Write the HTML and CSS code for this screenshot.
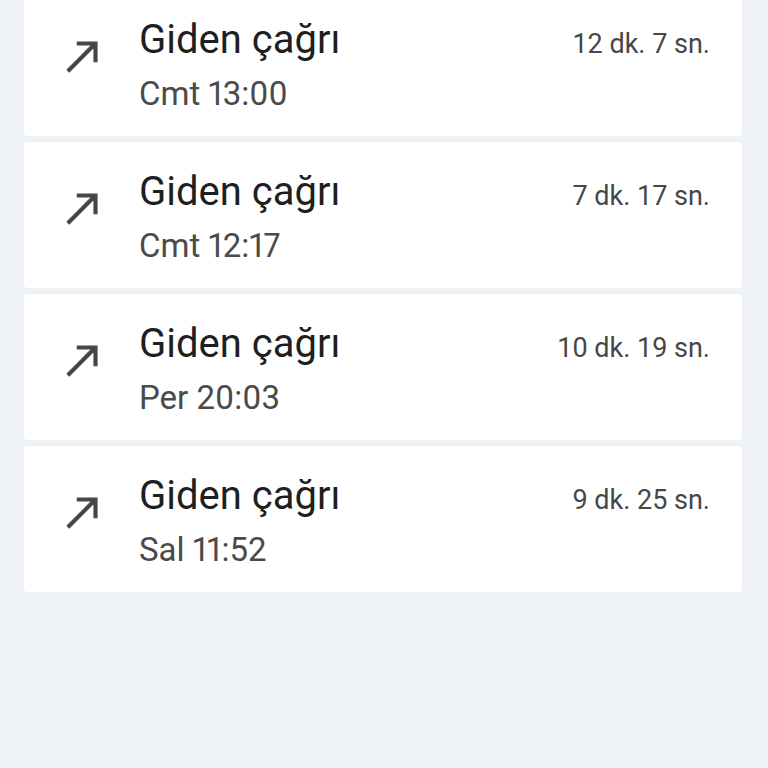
FILE: index.html
```html
<html>
    <head>
        <title>
            Arama geçmişi
        </title>
        <link rel="stylesheet" href="styles.css">
    </head>
    <body>
        <div class="call-list">
            <div class="call-card">
                <svg class="call-icon" viewBox="0 0 24 24"><path d="M9 5v2h6.59L4 18.59 5.41 20 17 8.41V15h2V5z"/></svg>
                <div class="call-info">
                    <div class="call-title">Giden çağrı</div>
                    <div class="call-time">Cmt 13:00</div>
                </div>
                <div class="call-duration">12 dk. 7 sn.</div>
            </div>
            <div class="call-card">
                <svg class="call-icon" viewBox="0 0 24 24"><path d="M9 5v2h6.59L4 18.59 5.41 20 17 8.41V15h2V5z"/></svg>
                <div class="call-info">
                    <div class="call-title">Giden çağrı</div>
                    <div class="call-time">Cmt 12:17</div>
                </div>
                <div class="call-duration">7 dk. 17 sn.</div>
            </div>
            <div class="call-card">
                <svg class="call-icon" viewBox="0 0 24 24"><path d="M9 5v2h6.59L4 18.59 5.41 20 17 8.41V15h2V5z"/></svg>
                <div class="call-info">
                    <div class="call-title">Giden çağrı</div>
                    <div class="call-time">Per 20:03</div>
                </div>
                <div class="call-duration">10 dk. 19 sn.</div>
            </div>
            <div class="call-card">
                <svg class="call-icon" viewBox="0 0 24 24"><path d="M9 5v2h6.59L4 18.59 5.41 20 17 8.41V15h2V5z"/></svg>
                <div class="call-info">
                    <div class="call-title">Giden çağrı</div>
                    <div class="call-time">Sal 11:52</div>
                </div>
                <div class="call-duration">9 dk. 25 sn.</div>
            </div>
        </div>
    </body>
</html>
```

FILE: styles.css
```css
body {
    background-color: #eef2f7;
    font-family: Roboto, "Liberation Sans", sans-serif;
    margin: 0;
    padding: 0;
}
.call-list {
    display: flex;
    flex-direction: column;
    gap: 6px;
    margin: -10px 26px 0 24px;
}
.call-card {
    display: flex;
    align-items: baseline;
    height: 146px;
    box-sizing: border-box;
    padding: 26px 32px 0 34px;
    background-color: #fff;
    border-radius: 4px;
}
.call-icon {
    align-self: flex-start;
    width: 50px;
    height: 50px;
    margin-top: 15px;
    fill: #444746;
    flex-shrink: 0;
}
.call-info {
    flex: 1;
    margin-left: 31px;
}
.call-title {
    font-size: 40px;
    line-height: 48px;
    color: #1f1f1f;
}
.call-time {
    font-size: 33px;
    line-height: 40px;
    margin-top: 10px;
    color: #4a4a4a;
    font-variant-numeric: proportional-nums;
}
.call-duration {
    font-size: 27px;
    line-height: 32px;
    color: #474747;
}
```
